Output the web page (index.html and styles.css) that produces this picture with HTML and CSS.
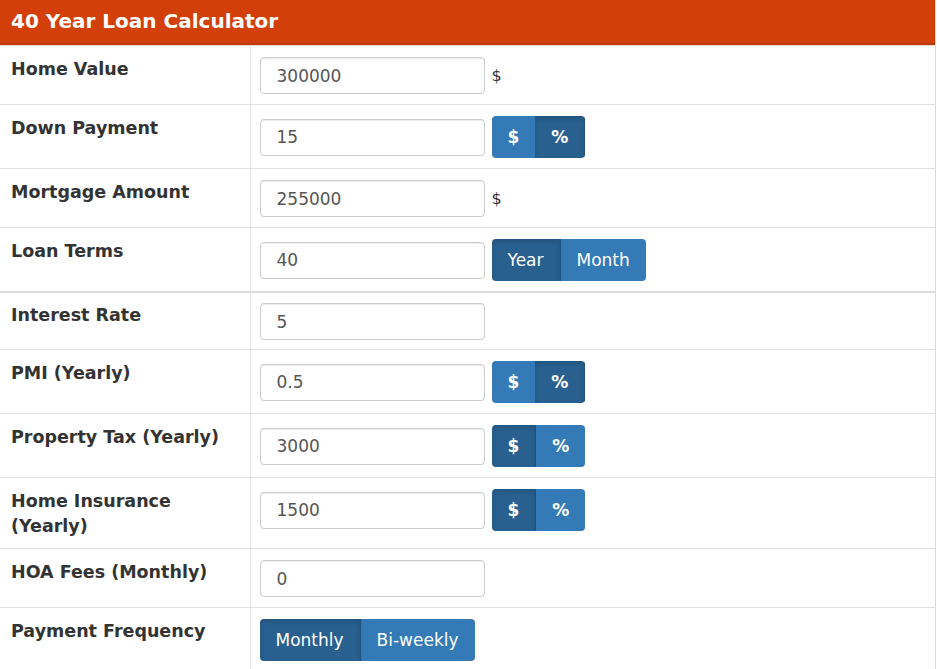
FILE: index.html
```html
<!DOCTYPE html>
<html lang="en">
<head>
  <meta charset="UTF-8">
  <meta name="viewport" content="width=device-width, initial-scale=1.0">
  <title>40 Year Loan Calculator</title>
  <link rel="stylesheet" href="styles.css">
</head>
<body>
  <div class="calc">
    <div class="calc-head">40 Year Loan Calculator</div>
    <table class="calc-table">
      <tr class="first">
        <td class="label">Home Value</td>
        <td class="value"><div class="field"><input type="text" value="300000"><span class="unit">$</span></div></td>
      </tr>
      <tr>
        <td class="label">Down Payment</td>
        <td class="value"><div class="field"><input type="text" value="15">
          <div class="btn-group"><button class="btn sym">$</button><button class="btn sym active">%</button></div></div></td>
      </tr>
      <tr>
        <td class="label">Mortgage Amount</td>
        <td class="value"><div class="field"><input type="text" value="255000"><span class="unit">$</span></div></td>
      </tr>
      <tr>
        <td class="label">Loan Terms</td>
        <td class="value"><div class="field"><input type="text" value="40">
          <div class="btn-group"><button class="btn active">Year</button><button class="btn">Month</button></div></div></td>
      </tr>
      <tr class="split">
        <td class="label">Interest Rate</td>
        <td class="value"><div class="field"><input type="text" value="5"></div></td>
      </tr>
      <tr>
        <td class="label">PMI (Yearly)</td>
        <td class="value"><div class="field"><input type="text" value="0.5">
          <div class="btn-group"><button class="btn sym">$</button><button class="btn sym active">%</button></div></div></td>
      </tr>
      <tr>
        <td class="label">Property Tax (Yearly)</td>
        <td class="value"><div class="field"><input type="text" value="3000">
          <div class="btn-group"><button class="btn sym active">$</button><button class="btn sym">%</button></div></div></td>
      </tr>
      <tr>
        <td class="label">Home Insurance<br>(Yearly)</td>
        <td class="value"><div class="field"><input type="text" value="1500">
          <div class="btn-group"><button class="btn sym active">$</button><button class="btn sym">%</button></div></div></td>
      </tr>
      <tr>
        <td class="label">HOA Fees (Monthly)</td>
        <td class="value"><div class="field"><input type="text" value="0"></div></td>
      </tr>
      <tr>
        <td class="label">Payment Frequency</td>
        <td class="value"><div class="field">
          <div class="btn-group"><button class="btn active">Monthly</button><button class="btn">Bi-weekly</button></div></div></td>
      </tr>
    </table>
  </div>
</body>
</html>
```

FILE: styles.css
```css
* {
  box-sizing: border-box;
}

body {
  margin: 0;
  background: #fff;
  font-family: "DejaVu Sans", Verdana, sans-serif;
  color: #333;
}

.calc {
  width: 936px;
  border-right: 1px solid #dcdcdc;
}

.calc-head {
  height: 45px;
  padding: 0 11px;
  background-color: #d33f08;
  border-bottom: 2px solid #b8390a;
  box-shadow: 0 1px 0 #f8d6c8;
  color: #fff;
  font-size: 20px;
  font-weight: bold;
  line-height: 42px;
}

.calc-table {
  width: 100%;
  border-collapse: collapse;
}

.calc-table td {
  vertical-align: top;
  padding: 11px 9px 10px;
  border-bottom: 1px solid #e0e0e0;
}

.calc-table tr.first td {
  padding-top: 12px;
}

.calc-table tr.split td {
  border-top: 2px solid #dcdcdc;
  padding-top: 10px;
  padding-bottom: 9px;
}

.label {
  width: 250px;
  padding-left: 11px !important;
  font-size: 17.5px;
  font-weight: bold;
  line-height: 24.5px;
}

.value {
  border-left: 1px solid #e6e6e6;
}

.field {
  display: flex;
  align-items: center;
  gap: 7px;
  min-height: 37px;
}

.field input {
  width: 225px;
  height: 37px;
  padding: 0 16px;
  border: 1px solid #ccc;
  border-radius: 4px;
  box-shadow: inset 0 1px 1px rgba(0, 0, 0, 0.075);
  font-family: inherit;
  font-size: 17px;
  color: #555;
}

.unit {
  font-size: 16px;
  color: #333;
}

.btn-group {
  display: flex;
  border-radius: 4px;
  overflow: hidden;
}

.btn {
  height: 42px;
  padding: 0 16px;
  border: none;
  background-color: #337ab7;
  color: #fff;
  font-family: inherit;
  font-size: 17px;
  cursor: pointer;
}

.btn.sym {
  font-weight: bold;
}

.btn.active {
  background-color: #28608f;
  box-shadow: inset 0 3px 5px rgba(0, 0, 0, 0.125);
  border-right: 1px solid #22527b;
}
```
